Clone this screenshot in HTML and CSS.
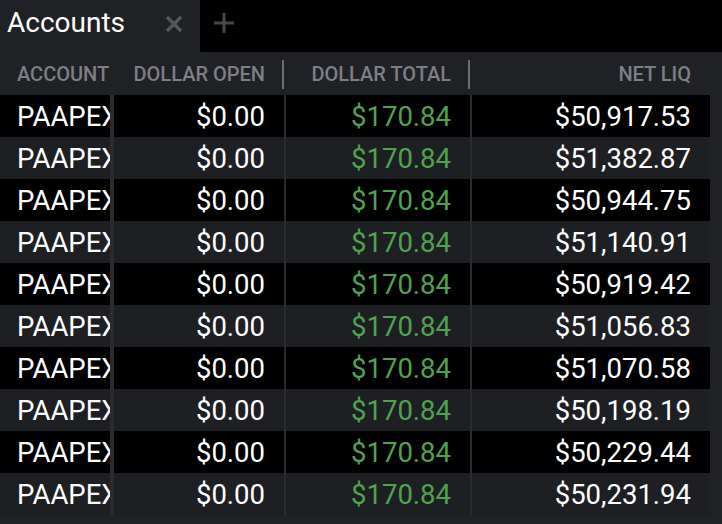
FILE: index.html
```html
<!DOCTYPE html>
<html>
<head>
<meta charset="utf-8">
<link rel="stylesheet" href="styles.css">
</head>
<body>
<div class="app">
  <div class="tabbar">
    <div class="tab">
      <span class="tab-title">Accounts</span>
      <svg class="tab-close" width="18" height="18" viewBox="0 0 18 18"><path d="M2 2 L16 16 M16 2 L2 16" stroke="#55565b" stroke-width="3.4" stroke-linecap="butt"/></svg>
    </div>
    <div class="tab-rest">
      <svg class="tab-add" width="20" height="20" viewBox="0 0 20 20"><path d="M10 0 V20 M0 10 H20" stroke="#46474b" stroke-width="3"/></svg>
    </div>
  </div>
  <div class="grid head">
    <div class="hcell c1">ACCOUNT</div>
    <div class="hcell c2 bar">DOLLAR OPEN</div>
    <div class="hcell c3 bar">DOLLAR TOTAL</div>
    <div class="hcell c4">NET LIQ</div>
  </div>
  <div class="body">
    <div class="grid row odd"><div class="cell c1">PAAPEX</div><div class="cell c2 s4">$0.00</div><div class="cell c3 s2 green">$170.84</div><div class="cell c4 s2">$50,917.53</div></div>
    <div class="grid row even"><div class="cell c1">PAAPEX</div><div class="cell c2 s4">$0.00</div><div class="cell c3 s2 green">$170.84</div><div class="cell c4 s2">$51,382.87</div></div>
    <div class="grid row odd"><div class="cell c1">PAAPEX</div><div class="cell c2 s4">$0.00</div><div class="cell c3 s2 green">$170.84</div><div class="cell c4 s2">$50,944.75</div></div>
    <div class="grid row even"><div class="cell c1">PAAPEX</div><div class="cell c2 s4">$0.00</div><div class="cell c3 s2 green">$170.84</div><div class="cell c4 s2">$51,140.91</div></div>
    <div class="grid row odd"><div class="cell c1">PAAPEX</div><div class="cell c2 s4">$0.00</div><div class="cell c3 s2 green">$170.84</div><div class="cell c4 s2">$50,919.42</div></div>
    <div class="grid row even"><div class="cell c1">PAAPEX</div><div class="cell c2 s4">$0.00</div><div class="cell c3 s2 green">$170.84</div><div class="cell c4 s2">$51,056.83</div></div>
    <div class="grid row odd"><div class="cell c1">PAAPEX</div><div class="cell c2 s4">$0.00</div><div class="cell c3 s2 green">$170.84</div><div class="cell c4 s2">$51,070.58</div></div>
    <div class="grid row even"><div class="cell c1">PAAPEX</div><div class="cell c2 s4">$0.00</div><div class="cell c3 s2 green">$170.84</div><div class="cell c4 s2">$50,198.19</div></div>
    <div class="grid row odd"><div class="cell c1">PAAPEX</div><div class="cell c2 s4">$0.00</div><div class="cell c3 s2 green">$170.84</div><div class="cell c4 s2">$50,229.44</div></div>
    <div class="grid row even"><div class="cell c1">PAAPEX</div><div class="cell c2 s4">$0.00</div><div class="cell c3 s2 green">$170.84</div><div class="cell c4 s2">$50,231.94</div></div>
  </div>
</div>
</body>
</html>
```
FILE: styles.css
```css
* { box-sizing: border-box; }
html, body { margin: 0; padding: 0; background: #202125; }
body { font-family: Roboto, "Liberation Sans", sans-serif; }
.app { width: 722px; height: 524px; background: #202125; overflow: hidden; }

.tabbar { display: flex; height: 52px; }
.tab { width: 200px; background: #202125; display: flex; align-items: flex-start; padding: 6px 0 0 7px; }
.tab-title { color: #ffffff; font-size: 28px; line-height: 34px; }
.tab-close { margin: 9px 0 0 auto; margin-right: 17px; }
.tab-rest { flex: 1; background: #000; display: flex; align-items: flex-start; padding: 13px 0 0 14px; }

.grid { display: grid; grid-template-columns: 110px 174px 186px 240px; width: 710px; }
.head { height: 43px; align-items: center; padding-top: 1px; }
.hcell { color: #7d7f86; font-size: 20px; font-weight: 500; line-height: 29px; height: 29px; text-align: right; padding-right: 19px; white-space: nowrap; overflow: hidden; }
.hcell.c1 { text-align: left; padding-left: 17px; padding-right: 0; }
.hcell.bar { border-right: 2px solid #6b6d72; padding-right: 17px; }

.row { height: 42px; }
.cell { font-size: 27.5px; line-height: 40px; padding-top: 2px; color: #fff; text-align: right; padding-right: 19px; white-space: nowrap; overflow: hidden; }
.cell.c1 { text-align: left; padding-left: 17px; padding-right: 0; text-overflow: clip; }
.cell.s4 { border-left: 4px solid #2a2b30; }
.cell.s2 { border-left: 2px solid #2a2b30; }
.odd .cell { background: #000; }
.even .cell { background: #1e1f23; }
.green { color: #4fa34f !important; }
```
